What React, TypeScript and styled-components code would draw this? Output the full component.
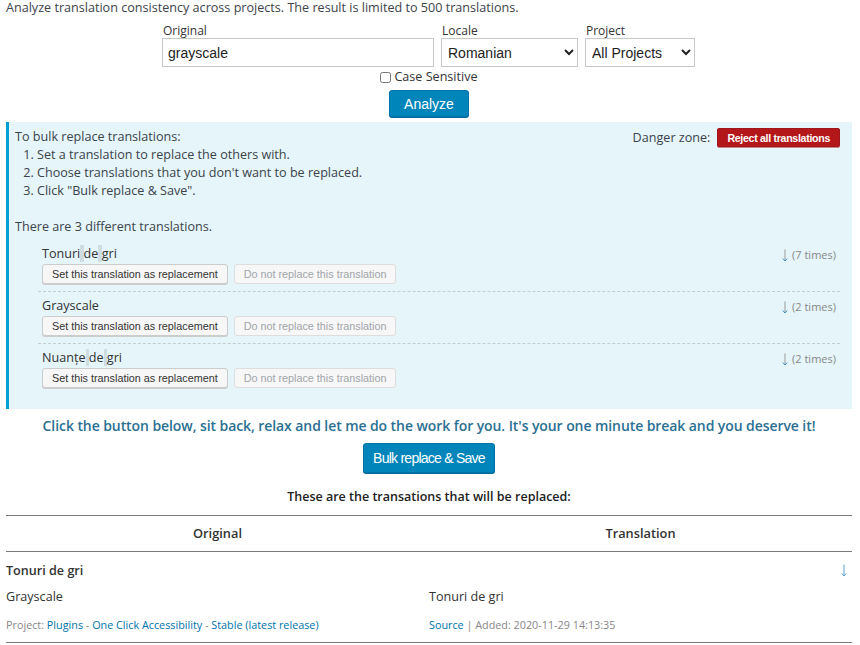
import styled, { createGlobalStyle } from 'styled-components';

const GlobalStyle = createGlobalStyle`
    body {
        margin: 0;
        background: #fff;
        font-family: "Open Sans", "Liberation Sans", sans-serif;
        font-size: 12.6px;
        color: #3c434a;
    }
    * { box-sizing: border-box; }
`;

const Page = styled.main`
    padding: 0 8px 0 6px;
    width: 860px;
`;

const Intro = styled.p`
    margin: 0;
    line-height: 16px;
`;

const Form = styled.form`
    display: flex;
    flex-flow: column;
    align-items: center;
    margin-top: 8px;
`;

const Fields = styled.div`
    display: flex;
    gap: 7px;
    margin-left: -1px;
`;

const Field = styled.label`
    display: flex;
    flex-flow: column;
    font-size: 12px;
    line-height: 14px;
    color: #333;
    padding-left: 1px;
`;

const TextInput = styled.input`
    width: 272px;
    height: 29px;
    border: 1px solid #c8c8c8;
    margin-left: -1px;
    padding: 0 5px;
    font-family: "Liberation Sans", Arial, sans-serif;
    font-size: 14px;
    color: #222;
`;

const Select = styled.select<{ $w: number }>`
    width: ${(p) => p.$w}px;
    height: 29px;
    border: 1px solid #c8c8c8;
    margin-left: -1px;
    padding: 0 2px;
    background: #fff;
    font-family: "Liberation Sans", Arial, sans-serif;
    font-size: 14px;
    color: #222;
`;

const CheckRow = styled.label`
    display: flex;
    align-items: center;
    gap: 3px;
    margin-top: 2px;
    line-height: 16px;
    color: #333;
    input {
        margin: 0;
        width: 11px;
        height: 11px;
    }
`;

const PrimaryButton = styled.button<{ $big?: boolean }>`
    background: #0085ba;
    color: #fff;
    border: 1px solid #0073aa;
    border-radius: 3px;
    box-shadow: 0 1px 0 #006799;
    font-family: "Liberation Sans", Arial, sans-serif;
    font-size: 14px;
    height: ${(p) => (p.$big ? 30 : 27)}px;
    padding: 0 ${(p) => (p.$big ? 9 : 14)}px;
    letter-spacing: ${(p) => (p.$big ? '-0.75px' : '0')};
    cursor: pointer;
`;

const AnalyzeButton = styled(PrimaryButton)`
    margin-top: 5px;
`;

const Panel = styled.section`
    margin-top: 5px;
    background: #e5f5fa;
    border-left: 3px solid #00a0d2;
    padding: 6px 12px 14px 6px;
    line-height: 18px;
`;

const PanelHead = styled.div`
    display: flex;
    justify-content: space-between;
    align-items: flex-start;
`;

const Steps = styled.ol`
    margin: 0;
    padding-left: 22px;
`;

const Danger = styled.div`
    display: flex;
    align-items: center;
    gap: 7px;
`;

const DangerButton = styled.button`
    background: #b3171a;
    color: #fff;
    border: 1px solid #a0161a;
    border-radius: 2px;
    box-shadow: 0 1px 0 #c98686;
    font-family: "Liberation Sans", Arial, sans-serif;
    font-weight: bold;
    font-size: 10.6px;
    letter-spacing: -0.3px;
    height: 19px;
    padding: 0 9px;
`;

const Summary = styled.p`
    margin: 18px 0 6px;
`;

const Variants = styled.div`
    padding-left: 27px;
`;

const Variant = styled.div`
    display: flex;
    justify-content: space-between;
    padding: 3px 4px 7px 4px;
    margin-left: -4px;
    border-bottom: 1px dashed #c3cdd1;
    & + & {
        padding-top: 5px;
    }
    &:last-child {
        border-bottom: none;
    }
`;

const VariantText = styled.div`
    line-height: 18px;
    color: #333;
`;

const Space = styled.span`
    background: #cfdde3;
`;

const ButtonRow = styled.div`
    display: flex;
    gap: 6px;
    margin-top: 1px;
`;

const SmallButton = styled.button`
    height: 20px;
    padding: 0 9px;
    background: #f7f7f7;
    border: 1px solid #cccccc;
    border-radius: 3px;
    box-shadow: 0 1px 0 #ccc;
    font-family: "Liberation Sans", Arial, sans-serif;
    font-size: 10.8px;
    color: #333;
    &:disabled {
        color: #a0a5aa;
        background: #f7f7f7;
        border-color: #ddd;
        box-shadow: none;
    }
`;

const Count = styled.div`
    display: flex;
    align-items: center;
    gap: 4px;
    font-size: 11px;
    color: #888;
    height: 18px;
    margin-top: 1px;
`;

const Arrow = styled.span`
    display: inline-flex;
    svg {
        display: block;
    }
`;

const Motivation = styled.p`
    margin: 7px 0 0;
    text-align: center;
    font-weight: 600;
    font-size: 14px;
    color: #2b6f92;
    letter-spacing: -0.08px;
`;

const Center = styled.div`
    display: flex;
    justify-content: center;
    margin-top: 8px;
`;

const Caption = styled.p`
    margin: 15px 0 0;
    text-align: center;
    font-weight: 600;
    font-size: 12.5px;
    color: #222;
`;

const Table = styled.table`
    width: 846px;
    margin-top: 10px;
    border-collapse: collapse;
    border-top: 1.5px solid #7b7b7b;
    border-bottom: 1.5px solid #7b7b7b;
    th {
        font-weight: 600;
        font-size: 12.8px;
        color: #333;
        height: 36px;
        padding-bottom: 2px;
        border-bottom: 1.5px solid #7b7b7b;
    }
    td {
        padding: 0;
        vertical-align: top;
    }
`;

const OriginalCell = styled.td`
    font-weight: 600;
    color: #333;
`;

const SpanRow = styled.div`
    display: flex;
    justify-content: space-between;
    align-items: center;
    padding-right: 5px;
    height: 36px;
`;

const TextCell = styled.div`
    height: 28px;
    line-height: 18px;
    color: #333;
`;

const Meta = styled.div`
    font-size: 10.8px;
    color: #888;
    height: 26px;
    line-height: 18px;
    a {
        color: #0073aa;
        text-decoration: none;
    }
`;

const DownArrow = ({ blue }: { blue?: boolean }) => (
    <svg width="6" height="13" viewBox="0 0 6 13">
        <path d="M3 0.5V11.5" stroke={blue ? '#5aa3d6' : '#999'} strokeWidth="1" />
        <path d="M0.8 9.5L3 12L5.2 9.5" stroke={blue ? '#5aa3d6' : '#3a8fc8'} strokeWidth="1" fill="none" />
    </svg>
);

const renderSpaced = (text: string) =>
    text.split(' ').map((word, i) => (
        <span key={i}>
            {i > 0 && <Space> </Space>}
            {word}
        </span>
    ));

const variants = [
    { text: 'Tonuri de gri', count: 7 },
    { text: 'Grayscale', count: 2 },
    { text: 'Nuanțe de gri', count: 2 },
];

const App = () => {
    return (
        <>
            <GlobalStyle />
            <Page>
                <Intro>Analyze translation consistency across projects. The result is limited to 500 translations.</Intro>
                <Form onSubmit={(e) => e.preventDefault()}>
                    <Fields>
                        <Field>
                            Original
                            <TextInput defaultValue="grayscale" />
                        </Field>
                        <Field>
                            Locale
                            <Select $w={137} defaultValue="ro">
                                <option value="ro">Romanian</option>
                            </Select>
                        </Field>
                        <Field>
                            Project
                            <Select $w={110} defaultValue="all">
                                <option value="all">All Projects</option>
                            </Select>
                        </Field>
                    </Fields>
                    <CheckRow>
                        <input type="checkbox" />
                        Case Sensitive
                    </CheckRow>
                    <AnalyzeButton type="submit">Analyze</AnalyzeButton>
                </Form>

                <Panel>
                    <PanelHead>
                        <div>
                            To bulk replace translations:
                            <Steps>
                                <li>Set a translation to replace the others with.</li>
                                <li>Choose translations that you don't want to be replaced.</li>
                                <li>Click "Bulk replace &amp; Save".</li>
                            </Steps>
                        </div>
                        <Danger>
                            Danger zone:
                            <DangerButton>Reject all translations</DangerButton>
                        </Danger>
                    </PanelHead>
                    <Summary>There are 3 different translations.</Summary>
                    <Variants>
                        {variants.map((v) => (
                            <Variant key={v.text}>
                                <div>
                                    <VariantText>{renderSpaced(v.text)}</VariantText>
                                    <ButtonRow>
                                        <SmallButton>Set this translation as replacement</SmallButton>
                                        <SmallButton disabled>Do not replace this translation</SmallButton>
                                    </ButtonRow>
                                </div>
                                <Count>
                                    <Arrow>
                                        <DownArrow />
                                    </Arrow>
                                    ({v.count} times)
                                </Count>
                            </Variant>
                        ))}
                    </Variants>
                </Panel>

                <Motivation>
                    Click the button below, sit back, relax and let me do the work for you. It's your one minute break and you deserve it!
                </Motivation>
                <Center>
                    <PrimaryButton $big>Bulk replace &amp; Save</PrimaryButton>
                </Center>
                <Caption>These are the transations that will be replaced:</Caption>

                <Table>
                    <thead>
                        <tr>
                            <th style={{ width: '50%' }}>Original</th>
                            <th>Translation</th>
                        </tr>
                    </thead>
                    <tbody>
                        <tr>
                            <OriginalCell colSpan={2}>
                                <SpanRow>
                                    Tonuri de gri
                                    <Arrow>
                                        <DownArrow blue />
                                    </Arrow>
                                </SpanRow>
                            </OriginalCell>
                        </tr>
                        <tr>
                            <td>
                                <TextCell>Grayscale</TextCell>
                                <Meta>
                                    Project: <a href="#">Plugins</a> - <a href="#">One Click Accessibility</a> -{' '}
                                    <a href="#">Stable</a> <a href="#">(latest release)</a>
                                </Meta>
                            </td>
                            <td>
                                <TextCell>Tonuri de gri</TextCell>
                                <Meta>
                                    <a href="#">Source</a> | Added: 2020-11-29 14:13:35
                                </Meta>
                            </td>
                        </tr>
                    </tbody>
                </Table>
            </Page>
        </>
    );
};

export default App;
